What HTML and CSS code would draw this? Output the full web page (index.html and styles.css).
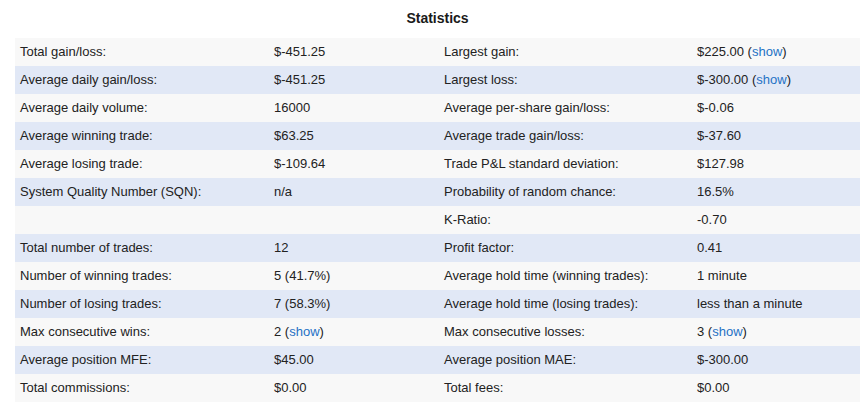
FILE: index.html
```html
<!DOCTYPE html>
<html>
<head>
<meta charset="utf-8">
<link rel="stylesheet" href="styles.css">
</head>
<body>
<div class="page">
  <h2 class="title">Statistics</h2>
  <table class="stats">
    <colgroup>
      <col class="c1"><col class="c2"><col class="c3"><col class="c4">
    </colgroup>
    <tbody>
      <tr><td>Total gain/loss:</td><td>$-451.25</td><td>Largest gain:</td><td>$225.00 (<a href="#">show</a>)</td></tr>
      <tr><td>Average daily gain/loss:</td><td>$-451.25</td><td>Largest loss:</td><td>$-300.00 (<a href="#">show</a>)</td></tr>
      <tr><td>Average daily volume:</td><td>16000</td><td>Average per-share gain/loss:</td><td>$-0.06</td></tr>
      <tr><td>Average winning trade:</td><td>$63.25</td><td>Average trade gain/loss:</td><td>$-37.60</td></tr>
      <tr><td>Average losing trade:</td><td>$-109.64</td><td>Trade P&amp;L standard deviation:</td><td>$127.98</td></tr>
      <tr><td>System Quality Number (SQN):</td><td>n/a</td><td>Probability of random chance:</td><td>16.5%</td></tr>
      <tr><td></td><td></td><td>K-Ratio:</td><td>-0.70</td></tr>
      <tr><td>Total number of trades:</td><td>12</td><td>Profit factor:</td><td>0.41</td></tr>
      <tr><td>Number of winning trades:</td><td>5 (41.7%)</td><td>Average hold time (winning trades):</td><td>1 minute</td></tr>
      <tr><td>Number of losing trades:</td><td>7 (58.3%)</td><td>Average hold time (losing trades):</td><td>less than a minute</td></tr>
      <tr><td>Max consecutive wins:</td><td>2 (<a href="#">show</a>)</td><td>Max consecutive losses:</td><td>3 (<a href="#">show</a>)</td></tr>
      <tr><td>Average position MFE:</td><td>$45.00</td><td>Average position MAE:</td><td>$-300.00</td></tr>
      <tr><td>Total commissions:</td><td>$0.00</td><td>Total fees:</td><td>$0.00</td></tr>
    </tbody>
  </table>
</div>
</body>
</html>
```
FILE: styles.css
```css
html, body {
  margin: 0;
  padding: 0;
  background: #ffffff;
}
body {
  font-family: "Liberation Sans", Arial, Helvetica, sans-serif;
  color: #222222;
}
.page {
  width: 845px;
  margin-left: 15px;
  padding-top: 10px;
}
.title {
  margin: 0 0 12px 0;
  font-size: 14px;
  line-height: 16px;
  font-weight: bold;
  text-align: center;
  color: #1a1a1a;
}
.stats {
  width: 845px;
  border-collapse: collapse;
  table-layout: fixed;
  font-size: 13px;
}
.stats .c1 { width: 254px; }
.stats .c2 { width: 170px; }
.stats .c3 { width: 253px; }
.stats .c4 { width: 168px; }
.stats td {
  height: 28px;
  line-height: 28px;
  padding: 0 0 0 5px;
  white-space: nowrap;
  vertical-align: middle;
}
.stats tr:nth-child(odd) td { background: #f8f8f8; }
.stats tr:nth-child(even) td { background: #e1e8f6; }
.stats a {
  color: #1f72c5;
  text-decoration: none;
}
```
